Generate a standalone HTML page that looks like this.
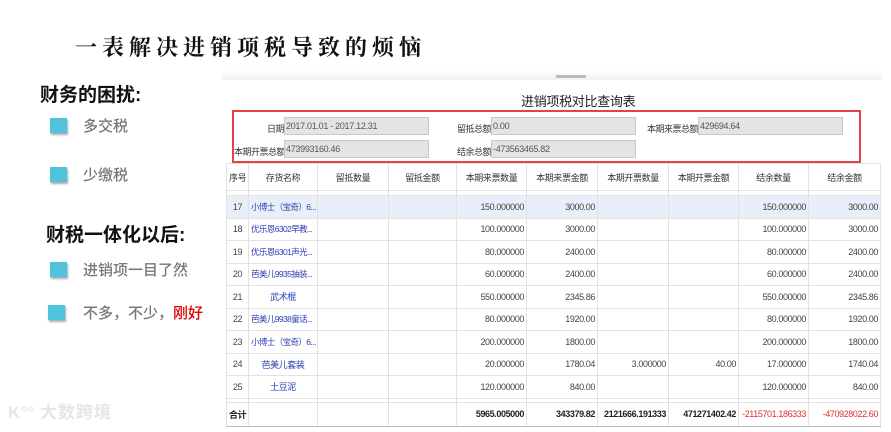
<!DOCTYPE html>
<html><head><meta charset="utf-8"><style>
*{margin:0;padding:0;box-sizing:border-box}
body{width:891px;height:432px;background:#fff;position:relative;overflow:hidden;font-family:"Liberation Sans","Noto Sans CJK SC",sans-serif}
.a{position:absolute;white-space:nowrap}
.h1{left:75px;top:31px;font-family:"Noto Serif CJK SC",serif;font-size:22px;letter-spacing:5px;color:#111;font-weight:700}
.h2{font-size:19px;font-weight:bold;color:#111}
.sq{width:17px;height:15px;background:#4fc3dc;box-shadow:1px 2px 2px #aaa}
.bt{font-size:15px;color:#777;font-weight:500}
.band{left:222px;top:70px;width:660px;height:10px;background:linear-gradient(#fff,#f1f1f1)}
.lbl{font-size:9px;color:#333;letter-spacing:-0.5px;text-align:right}
.inp{position:absolute;height:18px;background:#e4e4e4;border:1px solid #c8c8c8;font-size:9px;color:#555;padding:3px 1px;letter-spacing:-0.3px}
table{position:absolute;left:226px;top:163px;width:654px;border-collapse:collapse;table-layout:fixed;font-size:9px;letter-spacing:-0.4px;color:#444}
td{border:1px solid #e2e2e2;height:22.5px;text-align:right;padding:0 2px;overflow:hidden;white-space:nowrap}
td.c{text-align:center}
td.n{color:#2b3fb5;text-align:left;padding-left:2px;font-size:8.5px;letter-spacing:-0.6px}
td.nc{color:#2b3fb5;text-align:center}
tr.hd td{height:27px;text-align:center;color:#333}
tr.sp td{height:5px;border-top:1px solid #ccc}
tr.hl td{background:#e9eff8}
tr.pt td{height:4px}
tr.tt td{height:24px;font-weight:bold;color:#222;border-top:1px solid #bbb;border-bottom:1px solid #bbb}
.red{color:#e03030!important;font-weight:normal!important}
</style></head><body>
<div class="a h1">一表解决进销项税导致的烦恼</div>
<div class="a h2" style="left:40px;top:80px">财务的困扰:</div>
<div class="a sq" style="left:50px;top:118px"></div><div class="a bt" style="left:83px;top:115px">多交税</div>
<div class="a sq" style="left:50px;top:167px"></div><div class="a bt" style="left:83px;top:164px">少缴税</div>
<div class="a h2" style="left:46px;top:220px">财税一体化以后:</div>
<div class="a sq" style="left:50px;top:262px"></div><div class="a bt" style="left:83px;top:259px">进销项一目了然</div>
<div class="a sq" style="left:48px;top:305px"></div><div class="a bt" style="left:83px;top:302px">不多，不少，<span style="color:#e00000">刚好</span></div>
<div class="a" style="left:8px;top:398px;font-size:17px;color:#e6e6e6;font-weight:bold;letter-spacing:1px">K<sup style="font-size:9px">oo</sup> 大数跨境</div>
<div class="a band"></div>
<div class="a" style="left:556px;top:75px;width:30px;height:3px;background:#bbb"></div>
<div class="a" style="left:521px;top:91px;font-size:13px;color:#222;letter-spacing:-0.3px">进销项税对比查询表</div>
<div class="a" style="left:232px;top:110px;width:629px;height:53px;border:2px solid #e04545"></div>
<div class="a lbl" style="left:234px;width:50px;top:122px">日期</div><div class="inp" style="left:284px;top:117px;width:145px">2017.01.01 - 2017.12.31</div>
<div class="a lbl" style="left:440px;width:51px;top:122px">留抵总额</div><div class="inp" style="left:491px;top:117px;width:145px">0.00</div>
<div class="a lbl" style="left:640px;width:58px;top:122px">本期来票总额</div><div class="inp" style="left:698px;top:117px;width:145px">429694.64</div>
<div class="a lbl" style="left:234px;width:50px;top:145px">本期开票总额</div><div class="inp" style="left:284px;top:140px;width:145px">473993160.46</div>
<div class="a lbl" style="left:440px;width:51px;top:145px">结余总额</div><div class="inp" style="left:491px;top:140px;width:145px">-473563465.82</div>
<table>
<colgroup><col style="width:22px"><col style="width:69px"><col style="width:71px"><col style="width:68px"><col style="width:70px"><col style="width:71px"><col style="width:71px"><col style="width:70px"><col style="width:70px"><col style="width:72px"></colgroup>
<tr class="hd"><td>序号</td><td>存货名称</td><td>留抵数量</td><td>留抵金额</td><td>本期来票数量</td><td>本期来票金额</td><td>本期开票数量</td><td>本期开票金额</td><td>结余数量</td><td>结余金额</td></tr>
<tr class="sp"><td></td><td></td><td></td><td></td><td></td><td></td><td></td><td></td><td></td><td></td></tr>
<tr class="hl"><td class="c">17</td><td class="n">小博士（宝奇）6...</td><td></td><td></td><td>150.000000</td><td>3000.00</td><td></td><td></td><td>150.000000</td><td>3000.00</td></tr>
<tr><td class="c">18</td><td class="n">优乐恩6302早教...</td><td></td><td></td><td>100.000000</td><td>3000.00</td><td></td><td></td><td>100.000000</td><td>3000.00</td></tr>
<tr><td class="c">19</td><td class="n">优乐恩6301声光...</td><td></td><td></td><td>80.000000</td><td>2400.00</td><td></td><td></td><td>80.000000</td><td>2400.00</td></tr>
<tr><td class="c">20</td><td class="n">芭美儿9935抽装...</td><td></td><td></td><td>60.000000</td><td>2400.00</td><td></td><td></td><td>60.000000</td><td>2400.00</td></tr>
<tr><td class="c">21</td><td class="nc">武术棍</td><td></td><td></td><td>550.000000</td><td>2345.86</td><td></td><td></td><td>550.000000</td><td>2345.86</td></tr>
<tr><td class="c">22</td><td class="n">芭美儿9938童话...</td><td></td><td></td><td>80.000000</td><td>1920.00</td><td></td><td></td><td>80.000000</td><td>1920.00</td></tr>
<tr><td class="c">23</td><td class="n">小博士（宝奇）6...</td><td></td><td></td><td>200.000000</td><td>1800.00</td><td></td><td></td><td>200.000000</td><td>1800.00</td></tr>
<tr><td class="c">24</td><td class="nc">芭美儿套装</td><td></td><td></td><td>20.000000</td><td>1780.04</td><td>3.000000</td><td>40.00</td><td>17.000000</td><td>1740.04</td></tr>
<tr><td class="c">25</td><td class="nc">土豆泥</td><td></td><td></td><td>120.000000</td><td>840.00</td><td></td><td></td><td>120.000000</td><td>840.00</td></tr>
<tr class="pt"><td></td><td></td><td></td><td></td><td></td><td></td><td></td><td></td><td></td><td></td></tr>
<tr class="tt"><td class="c">合计</td><td></td><td></td><td></td><td>5965.005000</td><td>343379.82</td><td>2121666.191333</td><td>471271402.42</td><td class="red">-2115701.186333</td><td class="red">-470928022.60</td></tr>
</table>
</body></html>
